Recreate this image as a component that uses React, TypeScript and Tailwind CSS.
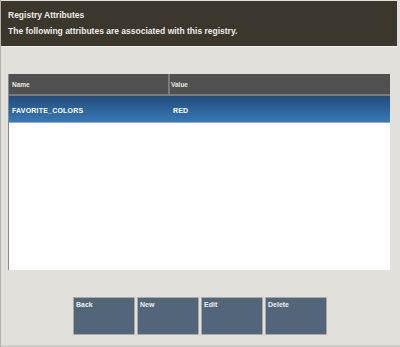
import React from "react";

export default function App() {
  const buttons = ["Back", "New", "Edit", "Delete"];
  return (
    <div
      className="w-[400px] h-[347px] bg-[#e1e0db] flex flex-col border-l border-[#b4b2ab] overflow-hidden"
      style={{ fontFamily: '"Liberation Sans", Arial, sans-serif' }}
    >
      <div className="mt-px mr-[3px] h-[46px] bg-[#3b372d] border-b border-[#f2f1ee] px-[7px] pt-[8px] text-[#ecebe8] font-bold">
        <div className="text-[8.5px] leading-[12px]">Registry Attributes</div>
        <div className="text-[8.5px] leading-[12px] mt-[4px]">
          The following attributes are associated with this registry.
        </div>
      </div>
      <div className="ml-[7px] mt-[27px] w-[382px] h-[196px] bg-white flex flex-col border-l border-[#8a8a8a]">
        <div className="h-[22px] bg-[#505050] flex border-b-2 border-[#7a7a7a] text-[#e6e6e6] font-bold text-[6.5px]">
          <div className="w-[161px] border-r-2 border-[#7c7c7c] pl-[3px] pt-[2px] flex items-center">Name</div>
          <div className="flex-1 pl-[1px] pt-[2px] flex items-center">Value</div>
        </div>
        <div className="h-[27px] bg-gradient-to-b from-[#234c7b] to-[#3879b7] flex text-white font-bold text-[7px] tracking-[0.2px] border-b border-[#9ab]">
          <div className="w-[163px] pl-[3px] pt-[4px] flex items-center">FAVORITE_COLORS</div>
          <div className="flex-1 pl-[1px] pt-[4px] flex items-center">RED</div>
        </div>
      </div>
      <div className="flex gap-[2px] ml-[72px] mt-[27px]">
        {buttons.map((b) => (
          <div
            key={b}
            className="w-[62px] h-[38px] bg-[#526579] border border-[#a9aaa8] text-[#eef0f2] font-bold text-[7px] px-[2px] pt-[2px] leading-[9px]"
          >
            {b}
          </div>
        ))}
      </div>
      <div className="mt-auto h-[2px] bg-[#cfcdc7]" />
    </div>
  );
}
